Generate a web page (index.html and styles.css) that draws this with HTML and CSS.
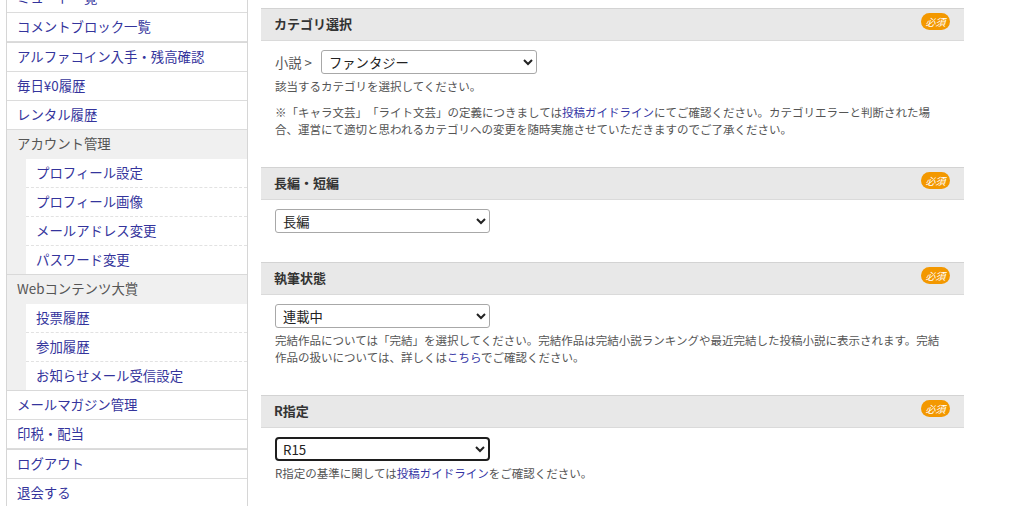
FILE: index.html
```html
<!DOCTYPE html>
<html lang="ja">
<head>
<meta charset="utf-8">
<title>作品設定</title>
<link rel="stylesheet" href="styles.css">
</head>
<body>
<div class="page">
  <nav class="side">
    <ul class="menu">
      <li class="item"><a href="#">ミュート一覧</a></li>
      <li class="item"><a href="#">コメントブロック一覧</a></li>
    </ul>
    <ul class="menu group">
      <li class="item"><a href="#">アルファコイン入手・残高確認</a></li>
      <li class="item"><a href="#">毎日¥0履歴</a></li>
      <li class="item"><a href="#">レンタル履歴</a></li>
      <li class="head">アカウント管理</li>
      <li class="subwrap">
        <ul class="sub">
          <li><a href="#">プロフィール設定</a></li>
          <li><a href="#">プロフィール画像</a></li>
          <li><a href="#">メールアドレス変更</a></li>
          <li><a href="#">パスワード変更</a></li>
        </ul>
      </li>
      <li class="head">Webコンテンツ大賞</li>
      <li class="subwrap">
        <ul class="sub">
          <li><a href="#">投票履歴</a></li>
          <li><a href="#">参加履歴</a></li>
          <li><a href="#">お知らせメール受信設定</a></li>
        </ul>
      </li>
      <li class="item"><a href="#">メールマガジン管理</a></li>
      <li class="item"><a href="#">印税・配当</a></li>
    </ul>
    <ul class="menu group">
      <li class="item"><a href="#">ログアウト</a></li>
      <li class="item"><a href="#">退会する</a></li>
    </ul>
  </nav>

  <main class="main">
    <section class="field">
      <div class="field-head"><h2>カテゴリ選択</h2><span class="req">必須</span></div>
      <div class="field-body">
        <div class="cat-row">
          <span class="cat-label">小説 &gt;</span>
          <select class="sel sel-wide"><option>ファンタジー</option></select>
        </div>
        <p class="help">該当するカテゴリを選択してください。</p>
        <p class="help note">※「キャラ文芸」「ライト文芸」の定義につきましては<a href="#">投稿ガイドライン</a>にてご確認ください。カテゴリエラーと判断された場合、運営にて適切と思われるカテゴリへの変更を随時実施させていただきますのでご了承ください。</p>
      </div>
    </section>

    <section class="field">
      <div class="field-head"><h2>長編・短編</h2><span class="req">必須</span></div>
      <div class="field-body">
        <select class="sel"><option>長編</option></select>
      </div>
    </section>

    <section class="field">
      <div class="field-head"><h2>執筆状態</h2><span class="req">必須</span></div>
      <div class="field-body">
        <select class="sel"><option>連載中</option></select>
        <p class="help">完結作品については「完結」を選択してください。完結作品は完結小説ランキングや最近完結した投稿小説に表示されます。完結作品の扱いについては、詳しくは<a href="#">こちら</a>でご確認ください。</p>
      </div>
    </section>

    <section class="field">
      <div class="field-head"><h2>R指定</h2><span class="req">必須</span></div>
      <div class="field-body">
        <select class="sel sel-focus"><option>R15</option></select>
        <p class="help">R指定の基準に関しては<a href="#">投稿ガイドライン</a>をご確認ください。</p>
      </div>
    </section>
  </main>
</div>
</body>
</html>
```

FILE: styles.css
```css
* { box-sizing: border-box; }
html, body {
  margin: 0;
  padding: 0;
  background: #fff;
  overflow: hidden;
}
body {
  font-family: "Noto Sans CJK JP", "Noto Sans", sans-serif;
  color: #555;
  text-spacing-trim: space-all;
}
a { text-decoration: none; }

.page {
  display: flex;
  align-items: flex-start;
  gap: 13px;
  padding-left: 6px;
  height: 506px;
}

/* ---------- sidebar ---------- */
.side {
  width: 242px;
  flex: none;
  margin-top: -16px;
  border-left: 1px solid #d6d6d6;
  border-right: 1px solid #d6d6d6;
  background: #fff;
}
.menu {
  list-style: none;
  margin: 0;
  padding: 0;
}
.menu.group { border-top: 1px solid #d9d9d9; }
.item, .head {
  height: 29px;
  line-height: 27px;
  border-bottom: 1px solid #dcdcdc;
  padding-left: 10px;
  font-size: 13.4px;
  white-space: nowrap;
}
.item a { color: #34349c; }
.head {
  background: #f0f0f0;
  color: #555;
  border-bottom: none;
}
.subwrap {
  background: #f0f0f0;
  padding-left: 19px;
  border-bottom: 1px solid #d9d9d9;
}
.sub {
  list-style: none;
  margin: 0;
  padding: 0;
  background: #fff;
}
.sub li {
  height: 29px;
  line-height: 27px;
  padding-left: 10px;
  font-size: 13.4px;
  border-bottom: 1px dashed #e2e2e2;
  white-space: nowrap;
}
.sub li:last-child {
  height: 28px;
  border-bottom: none;
}
.sub li a { color: #34349c; }

/* ---------- main ---------- */
.main {
  width: 703px;
  flex: none;
  margin-top: 8px;
}
.field { margin-bottom: 29px; }
.field-head {
  display: flex;
  align-items: flex-start;
  justify-content: space-between;
  height: 33px;
  background: #e8e8e8;
  border-top: 1px solid #d3d3d3;
  border-bottom: 1px solid #dadada;
  padding: 6px 14px 0 13px;
}
.field-head h2 {
  margin: 0;
  font-size: 13px;
  line-height: 17px;
  font-weight: bold;
  color: #333;
}
.req {
  display: inline-block;
  width: 29px;
  height: 17px;
  line-height: 17px;
  border-radius: 9px;
  background: #f39800;
  color: #fff;
  font-size: 10px;
  font-style: italic;
  text-align: center;
  margin-top: -2px;
}
.field-body {
  padding: 9px 16px 0 14px;
}
.cat-row {
  display: flex;
  align-items: center;
  gap: 5px;
}
.cat-label {
  width: 41px;
  font-size: 13.3px;
  color: #555;
  white-space: nowrap;
}
.sel {
  display: block;
  width: 215px;
  height: 24px;
  font-family: "Noto Sans CJK JP", "Noto Sans", sans-serif;
  font-size: 13.3px;
  color: #222;
  background: #fff;
  border: 1px solid #a8a8a8;
  border-radius: 3px;
  padding: 0 3px;
}
.sel-wide { width: 216px; }
.sel-focus {
  border: 2px solid #1e1e1e;
  border-radius: 4px;
  padding: 0 2px;
}
.help {
  margin: 4px 0 0;
  font-size: 11.5px;
  line-height: 17px;
  color: #555;
}
.help.note { margin-top: 9px; }
.help a { color: #3434a4; }
```
